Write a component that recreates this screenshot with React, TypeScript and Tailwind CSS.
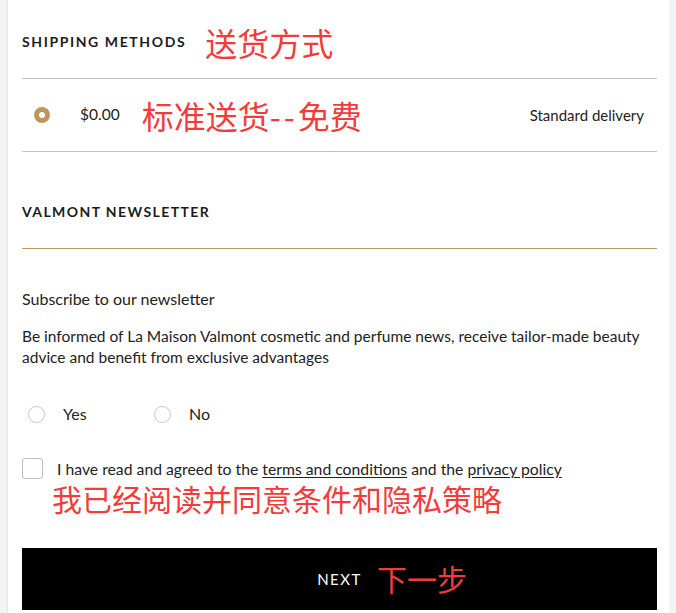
import React from "react";

const cn = { fontFamily: '"Noto Sans CJK SC", sans-serif' } as const;

export default function App() {
  return (
    <div
      className="flex w-[676px] min-h-[613px] bg-[#f2f3f4] text-[#222]"
      style={{ fontFamily: 'Lato, "Liberation Sans", sans-serif' }}
    >
      <div className="w-[8px] shrink-0 border-r border-[#e6e7e8]" />
      <div className="flex-1 bg-white pl-[14px] pr-[12px]">
        {/* Shipping methods */}
        <div className="h-[78px] pt-[6px] flex items-center gap-[19px]">
          <h2 className="text-[14px] font-bold tracking-[1.6px] leading-[20px] text-[#1c1c1c]">
            SHIPPING METHODS
          </h2>
          <span style={cn} className="text-[32px] leading-[32px] text-[#f23c3c]">
            送货方式
          </span>
        </div>
        <div className="border-t border-[#c4c4c4] h-[74px] border-b flex items-center">
          <span className="ml-[12px] w-[16px] h-[16px] rounded-full border-[5px] border-[#c0955b] bg-white" />
          <span className="ml-[30px] text-[15.5px]">$0.00</span>
          <span style={cn} className="ml-[22px] text-[32px] leading-[32px] text-[#f23c3c]">
            标准送货<span className="tracking-[3px]">--</span>免费
          </span>
          <span className="ml-auto mr-[13px] text-[15px]">Standard delivery</span>
        </div>

        {/* Newsletter */}
        <div className="pt-[50px] pb-[26px] border-b border-[#c4955a]">
          <h2 className="text-[14px] font-bold tracking-[1.4px] leading-[20px] text-[#1c1c1c]">
            VALMONT NEWSLETTER
          </h2>
        </div>
        <p className="mt-[40px] text-[16px] leading-[20px]">Subscribe to our newsletter</p>
        <p className="mt-[17px] text-[15.5px] leading-[21px]">
          Be informed of La Maison Valmont cosmetic and perfume news, receive tailor-made beauty
          advice and benefit from exclusive advantages
        </p>

        <div className="mt-[36px] h-[20px] flex items-center">
          <label className="flex items-center w-[132px]">
            <span className="ml-[6px] w-[17px] h-[17px] rounded-full border border-[#c6c6c6]" />
            <span className="ml-[18px] text-[16px]">Yes</span>
          </label>
          <label className="flex items-center">
            <span className="w-[17px] h-[17px] rounded-full border border-[#c6c6c6]" />
            <span className="ml-[18px] text-[16px]">No</span>
          </label>
        </div>

        <div className="mt-[34px] h-[21px] flex items-center">
          <span className="w-[21px] h-[21px] rounded-[3px] border border-[#bdbdbd]" />
          <span className="ml-[14px] text-[15.75px] leading-[18px]">
            I have read and agreed to the{" "}
            <span className="underline underline-offset-2">terms and conditions</span> and the{" "}
            <span className="underline underline-offset-2">privacy policy</span>
          </span>
        </div>
        <div style={cn} className="mt-[4px] ml-[30px] text-[30px] leading-[30px] text-[#f23c3c]">
          我已经阅读并同意条件和隐私策略
        </div>

        <div className="relative mt-[35px] h-[62px] bg-black flex items-center justify-center">
          <span className="text-white text-[15px] tracking-[1.5px] leading-[20px]">NEXT</span>
          <span
            style={cn}
            className="absolute left-[355px] top-[13px] text-[30px] leading-[34px] text-[#f23c3c]"
          >
            下一步
          </span>
        </div>
      </div>
      <div className="w-[7px] shrink-0" />
    </div>
  );
}
